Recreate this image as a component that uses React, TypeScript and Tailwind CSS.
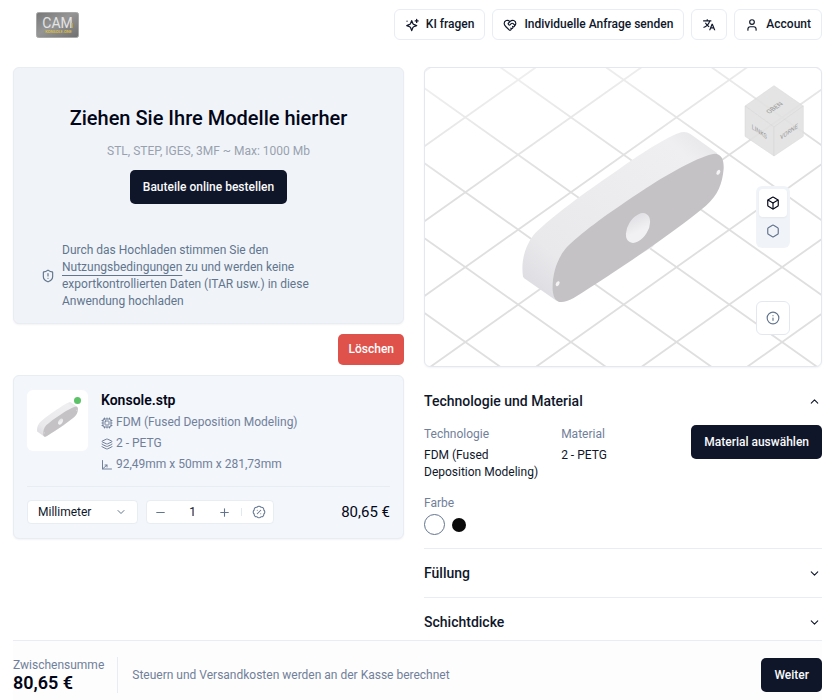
import { useState } from 'react'
import type { ReactNode } from 'react'
import { clsx } from 'clsx'
import {
  Box,
  ChevronDown,
  ChevronUp,
  Cpu,
  HeartHandshake,
  Hexagon,
  Info,
  Layers,
  Minus,
  Plus,
  ShieldAlert,
  User,
} from 'lucide-react'
import { RiTranslate2 } from 'react-icons/ri'

const GRID_STEP = 224.7
const GRID_SLOPE = 0.7093
const GRID_LINES = Array.from({ length: 14 }, (_, i) => i - 5)

function Logo() {
  return (
    <svg viewBox="0 0 43 26" className="h-[26px] w-[43px]" role="img" aria-label="CAM">
      <defs>
        <linearGradient id="logo-metal" x1="0" y1="0" x2="1" y2="1">
          <stop offset="0" stopColor="#777" />
          <stop offset="0.45" stopColor="#959595" />
          <stop offset="1" stopColor="#6f6f6f" />
        </linearGradient>
      </defs>
      <rect x="0.5" y="0.5" width="42" height="25" rx="2" fill="url(#logo-metal)" stroke="#a8a8a8" />
      <text x="21.5" y="15.5" textAnchor="middle" fontSize="14" fontWeight="400" fill="#e4e4e4">CAM</text>
      <text x="22.5" y="21" textAnchor="middle" fontSize="4" fontWeight="500" fill="#e0c640">KONSOLE.ONE</text>
      <rect x="35.500" y="11" width="1.500" height="5" fill="#b9a04a" />
    </svg>
  )
}

function Sparkle({ className }: { className?: string }) {
  return (
    <svg viewBox="0 0 24 24" fill="none" stroke="currentColor" strokeWidth="2.2" strokeLinecap="round" strokeLinejoin="round" className={className} aria-hidden="true">
      <path d="M11.500 4.500 13.500 9.500a3 3 0 0 0 1.500 1.500L20 13l-5 2a3 3 0 0 0-1.500 1.500L11.500 21.500 9.500 16.500A3 3 0 0 0 8 15L3 13l5-2a3 3 0 0 0 1.500-1.500z" />
      <path d="M20 2.500v5M17.500 5h5M3.500 5.500v.010" />
    </svg>
  )
}

function AxisIcon({ className }: { className?: string }) {
  return (
    <svg viewBox="0 0 24 24" fill="none" stroke="currentColor" strokeWidth="2" strokeLinecap="round" strokeLinejoin="round" className={className} aria-hidden="true">
      <path d="M3 3v17h18M3 20 12 12M8 12h4v4" />
    </svg>
  )
}

function DiscountIcon({ className }: { className?: string }) {
  return (
    <svg viewBox="0 0 24 24" fill="none" stroke="currentColor" strokeWidth="1.8" strokeLinecap="round" strokeLinejoin="round" className={className} aria-hidden="true">
      <path d="M3.850 8.620a4 4 0 0 1 4.780-4.770 4 4 0 0 1 6.740 0 4 4 0 0 1 4.780 4.780 4 4 0 0 1 0 6.740 4 4 0 0 1-4.770 4.780 4 4 0 0 1-6.750 0 4 4 0 0 1-4.780-4.770 4 4 0 0 1 0-6.760Z" />
      <path d="m9 15 6-6M9 9h.010M15 15h.010" />
    </svg>
  )
}

function PartShape() {
  return (
    <g>
      <defs>
        <linearGradient id="part-side" x1="0" y1="1" x2="1" y2="0">
          <stop offset="0" stopColor="#d9d8dd" />
          <stop offset="0.22" stopColor="#e9e9ec" />
          <stop offset="0.85" stopColor="#efeff1" />
          <stop offset="1" stopColor="#e3e3e6" />
        </linearGradient>
        <linearGradient id="part-bore" x1="0" y1="0" x2="1" y2="1">
          <stop offset="0" stopColor="#dcdbe0" />
          <stop offset="0.6" stopColor="#f1f1f3" />
        </linearGradient>
      </defs>
      <path
        d="M310 650C305 615 309 570 340 527C375 487 470 414 600 326C670 277 745 229 784 217Q799 213 812 222L893 280L700 560L425 726Q416 726 408 721L320 659Q312 655 310 650Z"
        fill="url(#part-side)"
      />
      <path
        d="M399 690C397 650 409 596 444 559C490 514 570 456 680 384C750 338 845 286 885 281C908 281 913 304 912 326C908 370 896 404 858 438C770 512 590 634 462 714C420 737 402 727 399 690Z"
        fill="#c5c2c5"
      />
      <ellipse cx="655" cy="504" rx="30" ry="49" transform="rotate(32 655 504)" fill="url(#part-bore)" />
      <ellipse cx="896" cy="337" rx="5" ry="8" transform="rotate(30 896 337)" fill="#f4f4f5" />
      <ellipse cx="414" cy="671" rx="5" ry="8" transform="rotate(30 414 671)" fill="#f4f4f5" />
    </g>
  )
}

function ViewCube() {
  return (
    <g>
      <g fill="#e0e0e0" fillOpacity="0.88" stroke="#d6d6d6" strokeWidth="1.500" strokeLinejoin="round">
        <path d="M1063 77 1151 138 1063 201 976 138Z" />
        <path d="M976 138 1063 201V288L976 229Z" />
        <path d="M1151 138 1063 201V288L1151 229Z" />
      </g>
      <g fill="#999" fontSize="20" textAnchor="middle">
        <text transform="matrix(0.82 -0.57 0.82 0.57 1070 147)">OBEN</text>
        <text transform="matrix(0.82 0.57 0 1 1019 222)">LINKS</text>
        <text transform="matrix(0.82 -0.57 0 1 1108 222)">VORNE</text>
      </g>
    </g>
  )
}

function Viewer() {
  const [mode, setMode] = useState<'solid' | 'outline'>('solid')
  return (
    <section aria-label="Vorschau" className="relative h-[300px] overflow-hidden rounded-md border border-slate-200 bg-white shadow-xs">
      <svg viewBox="16 24 1188 894" preserveAspectRatio="xMidYMid slice" className="size-full">
        <defs>
          <linearGradient id="grid-fade" x1="0.2" y1="0" x2="0.4" y2="1">
            <stop offset="0" stopColor="#fff" stopOpacity="0.45" />
            <stop offset="0.4" stopColor="#fff" stopOpacity="1" />
          </linearGradient>
          <mask id="grid-mask" maskUnits="userSpaceOnUse" x="0" y="0" width="1220" height="940">
            <rect width="1220" height="940" fill="url(#grid-fade)" />
          </mask>
        </defs>
        <g stroke="#dfdfdf" strokeWidth="5.500" mask="url(#grid-mask)">
          {GRID_LINES.map((n) => {
            const y = 172 + n * GRID_STEP
            return (
              <g key={n}>
                <line x1={0} y1={y - 137 * GRID_SLOPE} x2={1220} y2={y + 1083 * GRID_SLOPE} />
                <line x1={0} y1={y + 137 * GRID_SLOPE} x2={1220} y2={y - 1083 * GRID_SLOPE} />
              </g>
            )
          })}
        </g>
        <PartShape />
        <ViewCube />
      </svg>
      <div className="absolute top-[118px] right-[31px] flex flex-col rounded-md bg-[#f0f4f8] p-[3px]">
        <button
          type="button"
          aria-label="Volumenkörper"
          aria-pressed={mode === 'solid'}
          onClick={() => setMode('solid')}
          className={clsx('flex size-7 items-center justify-center rounded', mode === 'solid' ? 'bg-white text-slate-950 shadow-xs' : 'text-slate-500')}
        >
          <Box className="size-[14px]" />
        </button>
        <button
          type="button"
          aria-label="Umriss"
          aria-pressed={mode === 'outline'}
          onClick={() => setMode('outline')}
          className={clsx('flex size-7 items-center justify-center rounded', mode === 'outline' ? 'bg-white text-slate-950 shadow-xs' : 'text-slate-500')}
        >
          <Hexagon className="size-[14px]" />
        </button>
      </div>
      <button type="button" aria-label="Informationen" className="absolute right-[31px] bottom-[31px] flex size-[34px] items-center justify-center rounded-md border border-slate-200 bg-white text-slate-500">
        <Info className="size-[14px]" />
      </button>
    </section>
  )
}

function HeaderButton({ children, label }: { children: ReactNode; label?: string }) {
  return (
    <button type="button" aria-label={label} className="flex h-[31px] items-center gap-[7px] rounded-md border border-[#e8edf3] bg-white px-[10px] font-medium text-slate-900">
      {children}
    </button>
  )
}

function PrimaryButton({ children }: { children: ReactNode }) {
  return (
    <button type="button" className="h-[34px] shrink-0 rounded-[5px] bg-[#101629] px-[13px] font-medium text-slate-50">
      {children}
    </button>
  )
}

function UploadCard() {
  return (
    <section className="rounded-md border border-[#e8edf3] bg-[#f0f4f8] px-[27px] pt-9 pb-[13px] shadow-xs">
      <div className="flex flex-col items-center">
        <h1 className="text-[20px] leading-7 font-medium text-slate-950">Ziehen Sie Ihre Modelle hierher</h1>
        <p className="mt-[11px] text-gray-400">STL, STEP, IGES, 3MF ~ Max: 1000 Mb</p>
        <div className="mt-[10px]">
          <PrimaryButton>Bauteile online bestellen</PrimaryButton>
        </div>
      </div>
      <div className="mt-[38px] flex items-center gap-[7px] text-slate-500">
        <ShieldAlert className="size-[14px] shrink-0" />
        <p className="max-w-[260px]">
          Durch das Hochladen stimmen Sie den{' '}
          <a href="#nutzungsbedingungen" className="underline underline-offset-4">Nutzungsbedingungen</a> zu und werden keine
          exportkontrollierten Daten (ITAR usw.) in diese Anwendung hochladen
        </p>
      </div>
    </section>
  )
}

function PartCard() {
  const [quantity, setQuantity] = useState(1)
  return (
    <article className="rounded-md border border-[#e8edf3] bg-[#f3f6fa] px-[13px] py-[14px] shadow-xs">
      <div className="flex gap-[13px]">
        <div className="relative size-[61px] shrink-0 rounded-md bg-white">
          <svg viewBox="160 38 900 900" className="size-full" aria-hidden="true">
            <PartShape />
          </svg>
          <span className="absolute top-[7px] right-[7px] size-[7px] rounded-full bg-[#5bc267]" />
        </div>
        <div className="text-[#71809a]">
          <h2 className="mb-1 text-[14px] leading-5 font-semibold text-slate-950">Konsole.stp</h2>
          <ul className="flex flex-col gap-[4px]">
            <li className="flex items-center gap-[3px]"><Cpu className="size-[12px]" />FDM (Fused Deposition Modeling)</li>
            <li className="flex items-center gap-[3px]"><Layers className="size-[12px]" />2 - PETG</li>
            <li className="flex items-center gap-[3px]"><AxisIcon className="size-[12px]" />92,49mm x 50mm x 281,73mm</li>
          </ul>
        </div>
      </div>
      <div className="mt-[13px] flex items-center gap-2 border-t border-[#e8edf3] pt-[13px]">
        <div className="relative">
          <select aria-label="Einheit" defaultValue="mm" className="h-6 w-[111px] appearance-none rounded border border-[#e8edf3] bg-white pr-7 pl-[10px] text-slate-900">
            <option value="mm">Millimeter</option>
            <option value="in">Zoll</option>
          </select>
          <ChevronDown className="pointer-events-none absolute top-[6px] right-[11px] size-[12px] text-slate-500" />
        </div>
        <div className="flex h-6 items-center rounded border border-[#e8edf3] bg-white text-slate-500">
          <button type="button" aria-label="Weniger" onClick={() => setQuantity(Math.max(1, quantity - 1))} className="px-[7px]">
            <Minus className="size-[13px]" />
          </button>
          <input
            aria-label="Menge"
            value={quantity}
            onChange={(event) => setQuantity(Number(event.target.value) || 1)}
            className="w-[37px] text-center text-slate-900"
          />
          <button type="button" aria-label="Mehr" onClick={() => setQuantity(quantity + 1)} className="px-[7px]">
            <Plus className="size-[13px]" />
          </button>
          <span className="ml-[3px] h-2 w-px bg-slate-200" />
          <button type="button" aria-label="Mengenrabatt" className="pr-[7px] pl-[10px]">
            <DiscountIcon className="size-[14px]" />
          </button>
        </div>
        <span className="ml-auto text-[15px] text-slate-950">80,65 €</span>
      </div>
    </article>
  )
}

interface AccordionProps {
  title: string
  defaultOpen?: boolean
  children?: ReactNode
}

function AccordionSection({ title, defaultOpen = false, children }: AccordionProps) {
  const [open, setOpen] = useState(defaultOpen)
  const Chevron = open ? ChevronUp : ChevronDown
  return (
    <section className="border-b border-[#e8edf3] last:border-b-0">
      <h2>
        <button
          type="button"
          aria-expanded={open}
          onClick={() => setOpen(!open)}
          className="flex h-12 w-full items-center justify-between text-[14px] font-medium text-slate-900"
        >
          {title}
          <Chevron className="mr-px size-[13px]" />
        </button>
      </h2>
      {open ? children : null}
    </section>
  )
}

function MaterialSettings() {
  const [color, setColor] = useState('white')
  return (
    <div className="pb-[13px]">
      <div className="flex items-start text-slate-900">
        <dl className="grid flex-1 grid-cols-2 gap-x-4 pt-px pr-[9px]">
          <div>
            <dt className="mb-1 text-[#71809a]">Technologie</dt>
            <dd>FDM (Fused Deposition Modeling)</dd>
          </div>
          <div>
            <dt className="mb-1 text-[#71809a]">Material</dt>
            <dd>2 - PETG</dd>
          </div>
        </dl>
        <PrimaryButton>Material auswählen</PrimaryButton>
      </div>
      <fieldset className="mt-[14px]">
        <legend className="text-[#71809a]">Farbe</legend>
        <div className="mt-[2px] flex items-center gap-[7px]">
          <input
            type="radio"
            name="color"
            aria-label="Weiß"
            checked={color === 'white'}
            onChange={() => setColor('white')}
            className="size-[21px] appearance-none rounded-full border border-slate-500 bg-white"
          />
          <input
            type="radio"
            name="color"
            aria-label="Schwarz"
            checked={color === 'black'}
            onChange={() => setColor('black')}
            className="size-[14px] appearance-none rounded-full bg-[#0a0a0a]"
          />
        </div>
      </fieldset>
    </div>
  )
}

export default function App() {
  return (
    <div className="flex min-h-screen flex-col bg-white pr-[18px] pl-[13px] font-['Roboto',sans-serif] text-[12px] leading-[17px] text-slate-950">
      <header className="flex items-center justify-between pt-[9px] pl-[23px]">
        <Logo />
        <nav className="flex gap-[7px]">
          <HeaderButton><Sparkle className="size-[14px]" />KI fragen</HeaderButton>
          <HeaderButton><HeartHandshake className="size-[14px]" />Individuelle Anfrage senden</HeaderButton>
          <HeaderButton label="Sprache"><RiTranslate2 className="size-[14px]" /></HeaderButton>
          <HeaderButton><User className="size-[14px]" />Account</HeaderButton>
        </nav>
      </header>
      <main className="mt-[27px] grid flex-1 grid-cols-[391fr_398fr] items-start gap-5">
        <div className="flex flex-col gap-[10px]">
          <UploadCard />
          <button type="button" className="h-[31px] self-end rounded-[5px] bg-[#df524b] px-[10px] font-medium text-white">Löschen</button>
          <PartCard />
        </div>
        <div>
          <Viewer />
          <div className="mt-[10px]">
            <AccordionSection title="Technologie und Material" defaultOpen>
              <MaterialSettings />
            </AccordionSection>
            <AccordionSection title="Füllung" />
            <AccordionSection title="Schichtdicke" />
          </div>
        </div>
      </main>
      <footer className="sticky bottom-0 -mt-1.5 flex items-center border-t border-[#e8edf3] bg-[#fdfdfd] pt-4 pb-[7px]">
        <div className="border-r border-[#e8edf3] pr-[13px]">
          <div className="leading-4 text-[#71809a]">Zwischensumme</div>
          <div className="text-[18px] leading-5 font-semibold">80,65 €</div>
        </div>
        <p className="flex-1 pl-[14px] text-[#71809a]">Steuern und Versandkosten werden an der Kasse berechnet</p>
        <PrimaryButton>Weiter</PrimaryButton>
      </footer>
    </div>
  )
}
